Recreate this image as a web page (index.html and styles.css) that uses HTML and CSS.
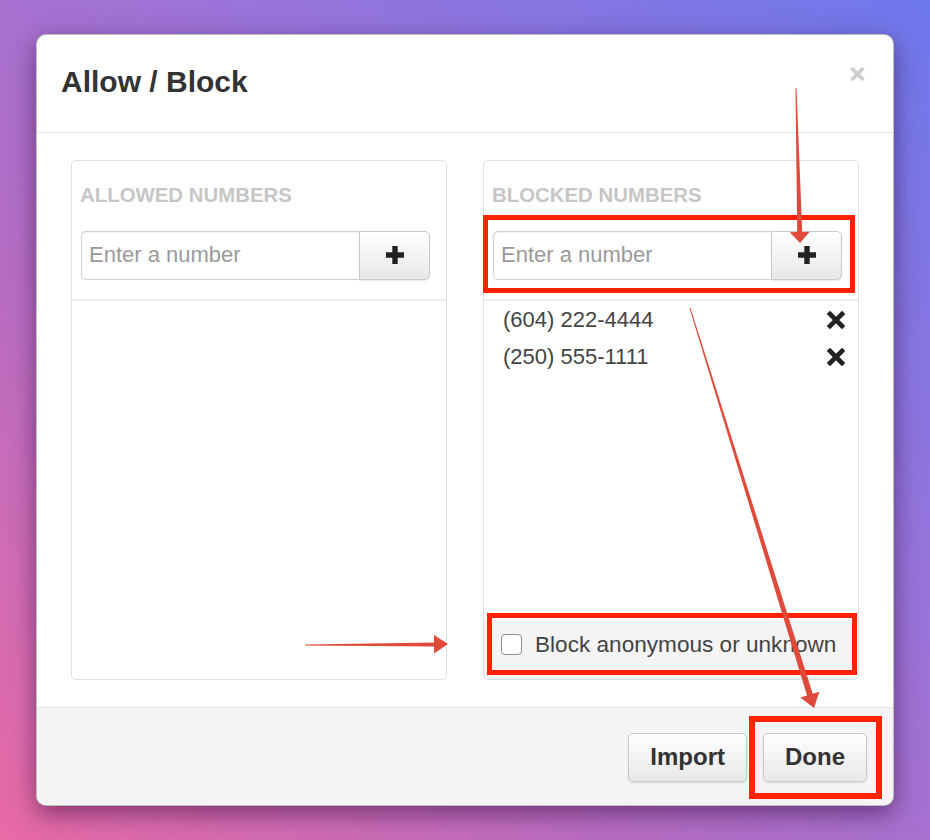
FILE: index.html
```html
<!DOCTYPE html>
<html>
<head>
<meta charset="utf-8">
<link rel="stylesheet" href="styles.css">
</head>
<body>
<div class="modal">
  <div class="modal-header">
    <h1 class="modal-title">Allow / Block</h1>
    <span class="close" aria-label="Close">
      <svg width="17" height="16" viewBox="0 0 17 16"><path d="M2.5 2 L14.5 14 M14.5 2 L2.5 14" stroke="#cdcdcd" stroke-width="3.6" fill="none"/></svg>
    </span>
  </div>
  <div class="modal-body">
    <section class="panel">
      <div class="panel-head">
        <h2 class="panel-title">ALLOWED NUMBERS</h2>
        <div class="input-group">
          <input class="number-input" type="text" placeholder="Enter a number">
          <button class="add-btn" type="button">
            <svg width="18" height="18" viewBox="0 0 18 18"><path d="M6.3 0h5.4v6.3h6.3v5.4h-6.3v6.3h-5.4v-6.3h-6.3v-5.4h6.3z" fill="#222"/></svg>
          </button>
        </div>
      </div>
      <ul class="number-list"></ul>
    </section>
    <section class="panel">
      <div class="panel-head">
        <h2 class="panel-title">BLOCKED NUMBERS</h2>
        <div class="input-group">
          <input class="number-input" type="text" placeholder="Enter a number">
          <button class="add-btn" type="button">
            <svg width="18" height="18" viewBox="0 0 18 18"><path d="M6.3 0h5.4v6.3h6.3v5.4h-6.3v6.3h-5.4v-6.3h-6.3v-5.4h6.3z" fill="#222"/></svg>
          </button>
        </div>
      </div>
      <ul class="number-list">
        <li class="number-item"><span>(604) 222-4444</span>
          <svg class="remove" width="18" height="18" viewBox="0 0 18 18"><path d="M3 3 L15 15 M15 3 L3 15" stroke="#222" stroke-width="4.6" stroke-linecap="square" fill="none"/></svg>
        </li>
        <li class="number-item"><span>(250) 555-1111</span>
          <svg class="remove" width="18" height="18" viewBox="0 0 18 18"><path d="M3 3 L15 15 M15 3 L3 15" stroke="#222" stroke-width="4.6" stroke-linecap="square" fill="none"/></svg>
        </li>
      </ul>
      <label class="panel-foot"><span class="checkbox"></span>Block anonymous or unknown</label>
    </section>
  </div>
  <div class="modal-footer">
    <button class="btn" type="button">Import</button>
    <button class="btn" type="button">Done</button>
  </div>
</div>

<div class="mark mark-input"></div>
<div class="mark mark-check"></div>
<div class="mark mark-done"></div>

<svg class="arrows" width="930" height="840" viewBox="0 0 930 840">
  <polygon fill="#e04a3a" points="795.5,88 797.2,232 789.7,232.3 800,243 809.7,231.7 802.2,232 796.5,88"/>
  <polygon fill="#e04a3a" points="689.5,308.2 807,695.5 800.3,697.6 814,708 819.4,691.7 812.7,693.7 690.5,307.9"/>
  <polygon fill="#e04a3a" points="305,644.6 434,642.5 434,635 448,644 434,653.5 434,646.5 305,645.6"/>
</svg>
</body>
</html>
```

FILE: styles.css
```css
* { box-sizing: border-box; }

html, body {
  margin: 0;
  height: 100%;
}

body {
  width: 930px;
  height: 840px;
  overflow: hidden;
  font-family: "Liberation Sans", Arial, sans-serif;
  color: #333;
  background: linear-gradient(to top right, #e96aa5 0%, #b56dc4 35%, #9a73d8 62%, #6e78ec 100%);
  padding: 34px 0 0 36px;
  position: relative;
}

.modal {
  width: 858px;
  height: 772px;
  background: #fff;
  border-radius: 10px;
  border: 1px solid rgba(0, 0, 0, 0.25);
  box-shadow: 0 8px 24px rgba(40, 0, 50, 0.5);
  display: flex;
  flex-direction: column;
  overflow: hidden;
}

.modal-header {
  display: flex;
  justify-content: space-between;
  align-items: flex-start;
  padding: 29px 27px 0 24px;
  height: 98px;
  border-bottom: 1px solid #e6e6e6;
}

.modal-title {
  margin: 0;
  font-size: 30px;
  line-height: 36px;
  font-weight: bold;
  color: #333;
}

.close {
  display: block;
  margin-top: 2px;
  line-height: 0;
}

.modal-body {
  display: flex;
  gap: 36px;
  padding: 27px 34px 27px 34px;
  flex: 1;
}

.panel {
  width: 376px;
  height: 520px;
  border: 1px solid #e1e1e1;
  border-radius: 5px;
  display: flex;
  flex-direction: column;
  overflow: hidden;
}

.panel-head {
  padding: 22px 16px 19px 8px;
  border-bottom: 2px solid #ececec;
}

.panel-title {
  margin: 0;
  font-size: 20.4px;
  line-height: 24px;
  font-weight: bold;
  color: #c6c6c6;
}

.input-group {
  display: flex;
  margin: 24px 0 0 1px;
  height: 49px;
}

.number-input {
  width: 278px;
  height: 49px;
  border: 1px solid #cfcfcf;
  border-right: none;
  border-radius: 5px 0 0 5px;
  padding: 0 7px;
  font-family: inherit;
  font-size: 22px;
  color: #333;
  background: #fff;
  outline: none;
  box-shadow: inset 0 1px 1px rgba(0, 0, 0, 0.06);
}

.number-input::placeholder {
  color: #9a9a9a;
}

.add-btn {
  width: 71px;
  height: 49px;
  border: 1px solid #c9c9c9;
  border-radius: 0 5px 5px 0;
  background: linear-gradient(#ffffff, #e7e7e7);
  display: flex;
  align-items: center;
  justify-content: center;
  padding: 0;
  box-shadow: 0 1px 1px rgba(0, 0, 0, 0.08);
}

.number-list {
  list-style: none;
  margin: 0;
  padding: 1px 13px 0 19px;
  flex: 1;
}

.number-item {
  display: flex;
  justify-content: space-between;
  align-items: center;
  height: 37px;
  font-size: 22px;
  color: #444;
}

.panel-foot {
  display: flex;
  align-items: center;
  gap: 13px;
  height: 60px;
  padding: 0 0 8px 17px;
  background: #f4f4f4;
  font-size: 22.6px;
  color: #444;
}

.checkbox {
  width: 21px;
  height: 21px;
  border: 1.5px solid #8d8d8d;
  border-radius: 4px;
  background: #fff;
  flex: none;
}

.modal-footer {
  height: 99px;
  border-top: 1px solid #e3e3e3;
  background: #f4f4f4;
  display: flex;
  justify-content: flex-end;
  align-items: flex-start;
  gap: 16px;
  padding: 25px 26px 0 0;
}

.btn {
  height: 49px;
  padding: 0 21px;
  border: 1px solid #c8c8c8;
  border-radius: 5px;
  background: linear-gradient(#ffffff, #e8e8e8);
  box-shadow: 0 1px 2px rgba(0, 0, 0, 0.1);
  font-family: inherit;
  font-size: 24px;
  font-weight: bold;
  color: #333;
}

.mark {
  position: absolute;
  border: 5px solid #ff2200;
}

.mark-input {
  left: 483px;
  top: 215px;
  width: 372px;
  height: 78px;
}

.mark-check {
  left: 487px;
  top: 613px;
  width: 370px;
  height: 62px;
}

.mark-done {
  left: 749px;
  top: 716px;
  width: 133px;
  height: 83px;
  border-width: 6px;
}

.arrows {
  position: absolute;
  left: 0;
  top: 0;
  pointer-events: none;
}
```
